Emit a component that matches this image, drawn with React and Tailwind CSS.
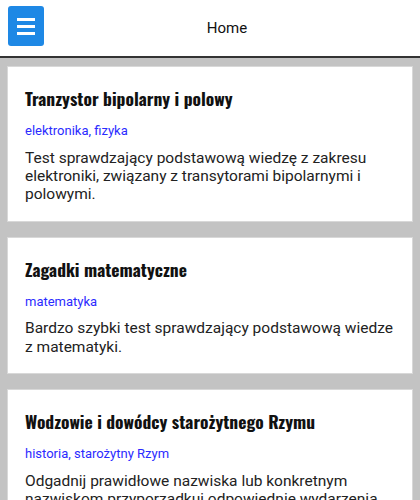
const quizzes = [
  {
    id: 1,
    title: 'Tranzystor bipolarny i polowy',
    tags: 'elektronika, fizyka',
    description:
      'Test sprawdzający podstawową wiedzę z zakresu elektroniki, związany z transytorami bipolarnymi i polowymi.',
  },
  {
    id: 2,
    title: 'Zagadki matematyczne',
    tags: 'matematyka',
    description: 'Bardzo szybki test sprawdzający podstawową wiedze z matematyki.',
  },
  {
    id: 3,
    title: 'Wodzowie i dowódcy starożytnego Rzymu',
    tags: 'historia, starożytny Rzym',
    description:
      'Odgadnij prawidłowe nazwiska lub konkretnym nazwiskom przyporządkuj odpowiednie wydarzenia.',
  },
];

function Hamburger() {
  return (
    <div className="flex flex-col gap-[4px]">
      <span className="block w-[18px] h-[3px] bg-white" />
      <span className="block w-[18px] h-[3px] bg-white" />
      <span className="block w-[18px] h-[3px] bg-white" />
    </div>
  );
}

export default function App() {
  return (
    <div className="min-h-screen bg-[#c3c3c3] font-['Roboto',sans-serif]">
      {/* Header */}
      <header className="h-[58px] bg-white border-b-2 border-[#333] flex items-start pl-2 pr-[10px]">
        <button className="mt-[6px] w-9 h-10 rounded-[3px] bg-[#1e88e5] flex items-center justify-center">
          <Hamburger />
        </button>
        <h1 className="flex-1 self-center text-center text-[15px] text-[#111]">Home</h1>
      </header>

      {/* Quiz list */}
      <div className="pt-2 px-[7px] flex flex-col gap-[15px]">
        {quizzes.map((q) => (
          <div key={q.id} className="bg-white border border-[#d8d8d8] px-[17px] pt-[18px] pb-[17px]">
            <h2 className="font-['Oswald','Liberation_Sans_Narrow',sans-serif] font-bold text-[17.5px] leading-[26px] text-[#111]">
              {q.title}
            </h2>
            <p className="mt-[10px] text-[13px] text-[#2b2bff]">{q.tags}</p>
            <p className="mt-[8px] text-[15.5px] leading-[18.4px] text-[#222]">{q.description}</p>
          </div>
        ))}
      </div>
    </div>
  );
}
